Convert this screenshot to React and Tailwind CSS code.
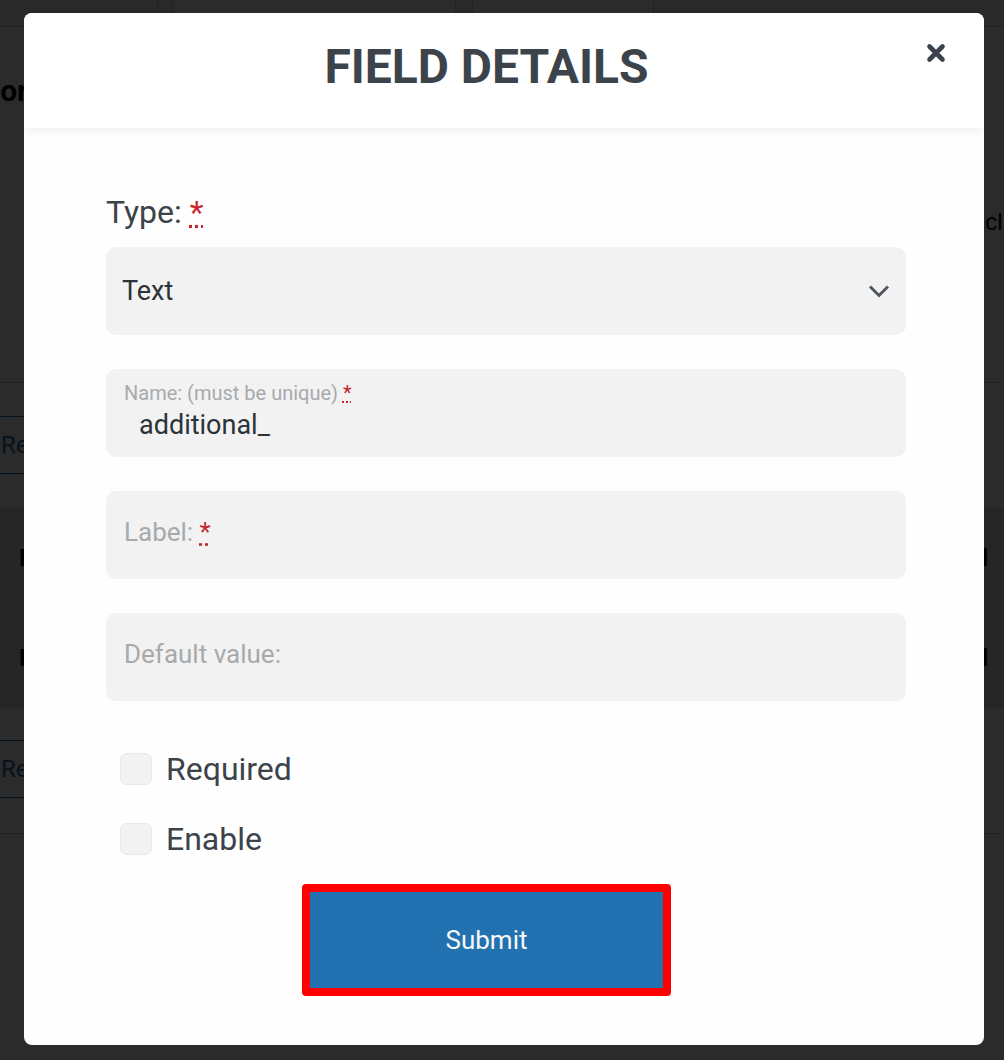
import React from 'react';

const BackgroundPage = () => {
  return (
    <div className="flex flex-col text-black">
      {/* Tab bar */}
      <div className="h-[27px] bg-[#f0f0f1] border-b border-[#c3c4c7] flex">
        <div className="w-[158px] border-r border-[#c3c4c7]" />
        <div className="w-[14px]" />
        <div className="w-[284px] border-x border-[#c3c4c7] bg-white" />
        <div className="w-[16px]" />
        <div className="w-[182px] border-x border-[#c3c4c7] bg-white" />
      </div>

      {/* Heading block */}
      <div className="h-[356px] border-b border-[#c3c4c7] flex justify-between">
        <h2 className="mt-[44px] -ml-[16px] text-[30px] font-bold leading-[40px]">Form Options</h2>
        <p className="mt-[180px] -mr-[28px] text-[24px] leading-[30px] font-['Liberation_Sans',sans-serif]">click</p>
      </div>

      {/* Button row */}
      <div className="h-[125px] flex items-start pt-[33px] justify-between">
        <button className="-ml-[16px] h-[58px] px-4 border border-[#2271b1] text-[#2271b1] text-[24px] rounded">Remove</button>
      </div>

      {/* Table rows */}
      <div className="h-[200px] bg-[#e2e2e2] flex flex-col">
        <div className="h-[100px] flex items-center justify-between">
          <span className="ml-[19px] text-[24px] font-bold">Name</span>
          <span className="mr-[16px] text-[24px] font-bold">Field</span>
        </div>
        <div className="h-[100px] flex items-center justify-between">
          <span className="ml-[19px] text-[24px] font-bold">Name</span>
          <span className="mr-[16px] text-[24px] font-bold">Field</span>
        </div>
      </div>

      <div className="h-[126px] border-b border-[#c3c4c7] pt-[32px]">
        <button className="-ml-[16px] h-[58px] px-4 border border-[#2271b1] text-[#2271b1] text-[24px] rounded">Remove</button>
      </div>
    </div>
  );
};

const Req = ({ className }) => (
  <abbr title="required" className={`text-[#c8262c] ${className || ''}`}>*</abbr>
);

const Field = ({ children, className }) => (
  <div className={`h-[88px] rounded-[10px] bg-[#f2f2f2] ${className || ''}`}>{children}</div>
);

const Checkbox = ({ label, className }) => (
  <label className={`ml-[14px] flex items-center gap-[14px] ${className || ''}`}>
    <span className="w-[32px] h-[32px] rounded-[7px] bg-[#f2f2f2] border border-[#e8e8e8] shrink-0" />
    <span className="text-[32px] leading-[38px] text-[#3c434a]">{label}</span>
  </label>
);

export default function App() {
  return (
    <div className="relative w-[1004px] h-[1060px] overflow-hidden bg-white font-['Roboto',sans-serif]">
      <BackgroundPage />

      {/* Dimmed backdrop */}
      <div className="absolute inset-0 bg-black/[0.83]" />

      {/* Modal */}
      <div className="absolute left-[24px] top-[13px] w-[960px] h-[1032px] bg-[#fefefe] rounded-lg overflow-hidden flex flex-col">
        <header className="relative z-10 h-[115px] shrink-0 bg-white pr-[35px] pt-[26px] shadow-[0_3px_10px_rgba(0,0,0,0.06)]">
          <h1 className="text-center text-[48px] leading-[56px] font-bold text-[#3c434a]">FIELD DETAILS</h1>
          <button className="absolute right-[38px] top-[30px] w-[20px] h-[20px] text-[#3c434a]">
            <svg viewBox="0 0 20 20" width="20" height="20" fill="none" stroke="currentColor" strokeWidth="4.6" strokeLinecap="round">
              <path d="M3.5 3.5L16.5 16.5M16.5 3.5L3.5 16.5" />
            </svg>
          </button>
        </header>

        <div className="flex-1 flex flex-col pt-[65px] pl-[82px] pr-[78px]">
          <div className="text-[32px] leading-[38px] text-[#3c434a]">
            Type: <Req />
          </div>

          <Field className="mt-[16px] flex items-center justify-between pl-[16px] pr-[15px]">
            <span className="text-[27px] leading-[32px] text-[#2c3338]">Text</span>
            <svg width="24" height="16" viewBox="0 0 24 16" fill="none" stroke="#50575e" strokeWidth="3">
              <path d="M3 3.5L12 12.5L21 3.5" />
            </svg>
          </Field>

          <Field className="mt-[34px] pl-[18px] pt-[12px]">
            <div className="text-[20px] leading-[24px] text-[#a7aaad]">
              Name: (must be unique) <Req />
            </div>
            <div className="mt-[4px] pl-[15px] text-[27px] leading-[32px] text-[#2c3338]">additional_</div>
          </Field>

          <Field className="mt-[34px] flex items-center pl-[18px] pb-[6px]">
            <span className="text-[26px] leading-[32px] text-[#a7aaad]">
              Label: <Req />
            </span>
          </Field>

          <Field className="mt-[34px] flex items-center pl-[18px] pb-[6px]">
            <span className="text-[26px] leading-[32px] text-[#a7aaad]">Default value:</span>
          </Field>

          <Checkbox label="Required" className="mt-[49px]" />
          <Checkbox label="Enable" className="mt-[32px]" />

          <button className="mt-[26px] ml-[196px] w-[369px] h-[112px] border-[8px] border-[#ff0000] rounded-[4px] bg-[#2271b1] text-[26px] text-[#f6f7f7]">
            Submit
          </button>
        </div>
      </div>
    </div>
  );
}
